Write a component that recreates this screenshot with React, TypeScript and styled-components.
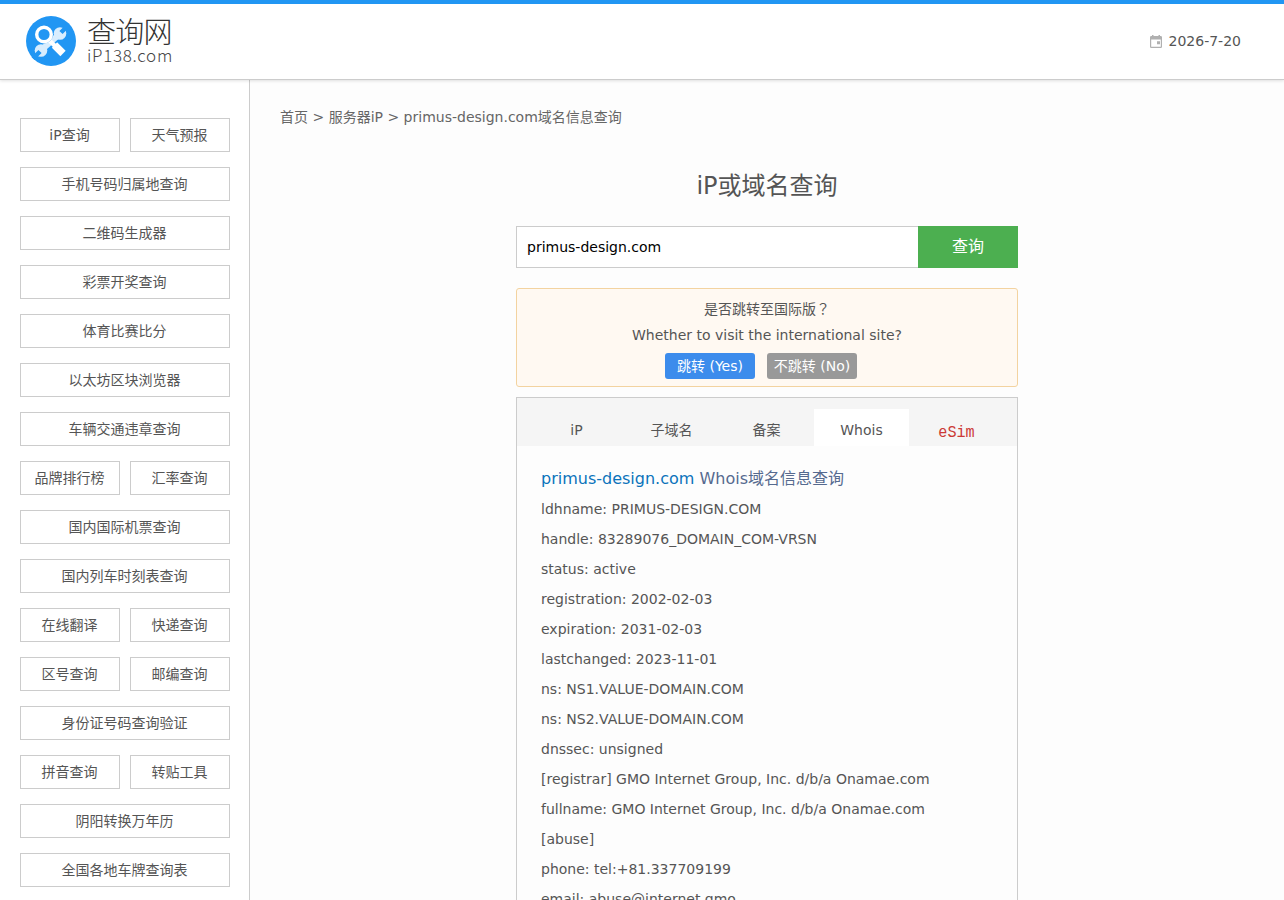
import React from 'react';
import styled, { createGlobalStyle } from 'styled-components';

const sans = `"DejaVu Sans", "Noto Sans CJK SC", sans-serif`;

const GlobalStyle = createGlobalStyle`
  * { box-sizing: border-box; }
  html, body { margin: 0; height: 100%; overflow: hidden; }
  body { background: #fdfdfd; color: #555; font: 14px/24px ${sans}; }
  #root { height: 100%; }
  a { color: inherit; text-decoration: none; }
  h1, p { margin: 0; padding: 0; font-weight: normal; }
`;

const Page = styled.div`
  display: flex;
  flex-direction: column;
  height: 100vh;
  overflow: hidden;
`;

const Header = styled.header`
  display: flex;
  flex: none;
  justify-content: space-between;
  align-items: flex-start;
  height: 80px;
  padding: 11px 43px 0 25px;
  background: #fff;
  border-top: 4px solid #2196f3;
  border-bottom: 1px solid #ccc;
  box-shadow: 0 1px 3px rgba(0, 0, 0, 0.12);
  z-index: 1;
`;

const Logo = styled.a`
  display: flex;
  gap: 10px;
`;

const LogoText = styled.span`
  display: flex;
  flex-direction: column;
  font-family: "Noto Sans CJK SC", sans-serif;
  font-weight: 300;
`;

const LogoName = styled.span`
  height: 33px;
  font-size: 29px;
  line-height: 31px;
  letter-spacing: -0.8px;
  color: #333;
`;

const LogoDomain = styled.span`
  font-size: 17px;
  line-height: 14px;
  letter-spacing: 0.7px;
  color: #444;
`;

const Today = styled.div`
  display: flex;
  align-items: center;
  gap: 7px;
  margin-top: 14px;

  svg { margin-top: 1px; }
`;

const Body = styled.div`
  display: flex;
  flex: 1;
  min-height: 0;
`;

const Sidebar = styled.nav`
  display: flex;
  flex: none;
  flex-direction: column;
  gap: 15px;
  width: 250px;
  padding: 38px 19px 0 20px;
  background: #fff;
  border-right: 1px solid #ccc;
  overflow: hidden;
`;

const SideRow = styled.div`
  display: flex;
  flex: none;
  gap: 10px;
`;

const SideLink = styled.a`
  flex: 1;
  height: 34px;
  padding-right: 1px;
  line-height: 32px;
  text-align: center;
  border: 1px solid #ccc;
  background: #fff;
`;

const Main = styled.main`
  flex: 1;
  padding: 25px 0 0 30px;
  overflow: hidden;
`;

const Breadcrumb = styled.p`
  color: #666;
`;

const Content = styled.section`
  width: 502px;
  margin: 39px 0 0 236px;
`;

const Title = styled.h1`
  font-size: 24px;
  line-height: 36px;
  text-align: center;
`;

const SearchForm = styled.form`
  display: flex;
  height: 42px;
  margin-top: 22px;
`;

const SearchInput = styled.input`
  flex: 1;
  min-width: 0;
  padding: 0 10px;
  border: 1px solid #ccc;
  border-right: 0;
  border-radius: 0;
  background: #fff;
  color: #000;
  font: 14px ${sans};
  outline: none;
`;

const SearchButton = styled.button`
  width: 100px;
  padding: 0 0 5px;
  border: 0;
  background: #4caf50;
  color: #fff;
  font: 16px ${sans};
`;

const Notice = styled.div`
  height: 99px;
  margin-top: 20px;
  padding-top: 7px;
  border: 1px solid #f3d3a0;
  border-radius: 3px;
  background: #fff9f2;
  line-height: 26px;
  text-align: center;
`;

const CenteredMark = styled.span`
  font-family: "Noto Sans CJK TC", sans-serif;
  line-height: 1;
`;

const NoticeActions = styled.div`
  display: flex;
  justify-content: center;
  gap: 12px;
  margin: 5px 12px 0 0;
`;

const NoticeButton = styled.a<{ $primary?: boolean }>`
  width: 90px;
  height: 26px;
  border-radius: 3px;
  background: ${({ $primary }) => ($primary ? '#3c8cec' : '#999')};
  color: #fff;
`;

const Panel = styled.div`
  height: 700px;
  margin-top: 10px;
  border: 1px solid #ccc;
`;

const Tabs = styled.div`
  display: flex;
  height: 48px;
  padding: 11px 0 0 12px;
  background: #f5f5f5;
`;

const Tab = styled.a<{ $active?: boolean }>`
  width: 95px;
  line-height: 42px;
  text-align: center;
  background: ${({ $active }) => ($active ? '#fff' : 'transparent')};
`;

const PromoTab = styled(Tab)`
  color: #cc3a36;
  font-family: "Liberation Mono", monospace;
  font-size: 17px;
  line-height: 47px;
  transform: scaleX(0.89);
`;

const Whois = styled.div`
  padding: 18px 24px 0;
  line-height: 30px;
`;

const WhoisTitle = styled.p`
  font-size: 16px;
  color: #566a8f;
`;

const DomainLink = styled.a`
  color: #0b73bb;
`;

const sideLinks: string[][] = [
  ['iP查询', '天气预报'],
  ['手机号码归属地查询'],
  ['二维码生成器'],
  ['彩票开奖查询'],
  ['体育比赛比分'],
  ['以太坊区块浏览器'],
  ['车辆交通违章查询'],
  ['品牌排行榜', '汇率查询'],
  ['国内国际机票查询'],
  ['国内列车时刻表查询'],
  ['在线翻译', '快递查询'],
  ['区号查询', '邮编查询'],
  ['身份证号码查询验证'],
  ['拼音查询', '转贴工具'],
  ['阴阳转换万年历'],
  ['全国各地车牌查询表'],
];

const records: string[] = [
  'ldhname: PRIMUS-DESIGN.COM',
  'handle: 83289076_DOMAIN_COM-VRSN',
  'status: active',
  'registration: 2002-02-03',
  'expiration: 2031-02-03',
  'lastchanged: 2023-11-01',
  'ns: NS1.VALUE-DOMAIN.COM',
  'ns: NS2.VALUE-DOMAIN.COM',
  'dnssec: unsigned',
  '[registrar] GMO Internet Group, Inc. d/b/a Onamae.com',
  'fullname: GMO Internet Group, Inc. d/b/a Onamae.com',
  '[abuse]',
  'phone: tel:+81.337709199',
  'email: abuse@internet.gmo',
];

const LogoMark = () => (
  <svg width="52" height="52" viewBox="0 0 52 52" fill="none">
    <circle cx="26" cy="26" r="25" fill="#2196f3" />
    <circle cx="35" cy="18.500" r="6.300" fill="#d8edfe" />
    <circle cx="16" cy="35.500" r="6.300" fill="#d8edfe" />
    <path d="M18 33.500L33 20.500" stroke="#d8edfe" strokeWidth="6" />
    <path d="M36 17.500l7-7M15 36.500l-7 7" stroke="#2196f3" strokeWidth="4.500" />
    <path d="M23.500 24.500l8 8" stroke="#fff" strokeWidth="4.500" />
    <path d="M29.500 30l8.500 8.500" stroke="#fff" strokeWidth="7.500" />
    <circle cx="19" cy="19.500" r="9" fill="#2196f3" />
    <circle cx="19" cy="19.500" r="7.300" stroke="#fff" strokeWidth="3.400" />
  </svg>
);

const CalendarIcon = () => (
  <svg width="12" height="13" viewBox="0 0 12 13">
    <path
      fill="#b0b0b0"
      fillRule="evenodd"
      d="M2 0h1.500v1h5V0H10v1h0.700Q12 1 12 2.300v9.400q0 1.300-1.300 1.300H1.300Q0 13 0 11.700V2.300Q0 1 1.300 1H2zM1.200 4.500v7.300h9.600V4.500zM7 6.300h3v3H7z"
    />
  </svg>
);

export default function App() {
  return (
    <Page>
      <GlobalStyle />
      <Header>
        <Logo href="#">
          <LogoMark />
          <LogoText>
            <LogoName>查询网</LogoName>
            <LogoDomain>iP138.com</LogoDomain>
          </LogoText>
        </Logo>
        <Today>
          <CalendarIcon />
          2026-7-20
        </Today>
      </Header>
      <Body>
        <Sidebar>
          {sideLinks.map((row) => (
            <SideRow key={row[0]}>
              {row.map((label) => (
                <SideLink key={label} href="#">{label}</SideLink>
              ))}
            </SideRow>
          ))}
        </Sidebar>
        <Main>
          <Breadcrumb>
            <a href="#">首页</a> &gt; <a href="#">服务器iP</a> &gt; primus-design.com域名信息查询
          </Breadcrumb>
          <Content>
            <Title>iP或域名查询</Title>
            <SearchForm>
              <SearchInput defaultValue="primus-design.com" />
              <SearchButton type="button">查询</SearchButton>
            </SearchForm>
            <Notice>
              <p>是否跳转至国际版<CenteredMark lang="zh-TW">？</CenteredMark></p>
              <p>Whether to visit the international site?</p>
              <NoticeActions>
                <NoticeButton href="#" $primary>跳转 (Yes)</NoticeButton>
                <NoticeButton href="#">不跳转 (No)</NoticeButton>
              </NoticeActions>
            </Notice>
            <Panel>
              <Tabs>
                <Tab href="#">iP</Tab>
                <Tab href="#">子域名</Tab>
                <Tab href="#">备案</Tab>
                <Tab href="#" $active>Whois</Tab>
                <PromoTab href="#">eSim</PromoTab>
              </Tabs>
              <Whois>
                <WhoisTitle>
                  <DomainLink href="#">primus-design.com</DomainLink> Whois域名信息查询
                </WhoisTitle>
                {records.map((line) => (
                  <p key={line}>{line}</p>
                ))}
              </Whois>
            </Panel>
          </Content>
        </Main>
      </Body>
    </Page>
  );
}
